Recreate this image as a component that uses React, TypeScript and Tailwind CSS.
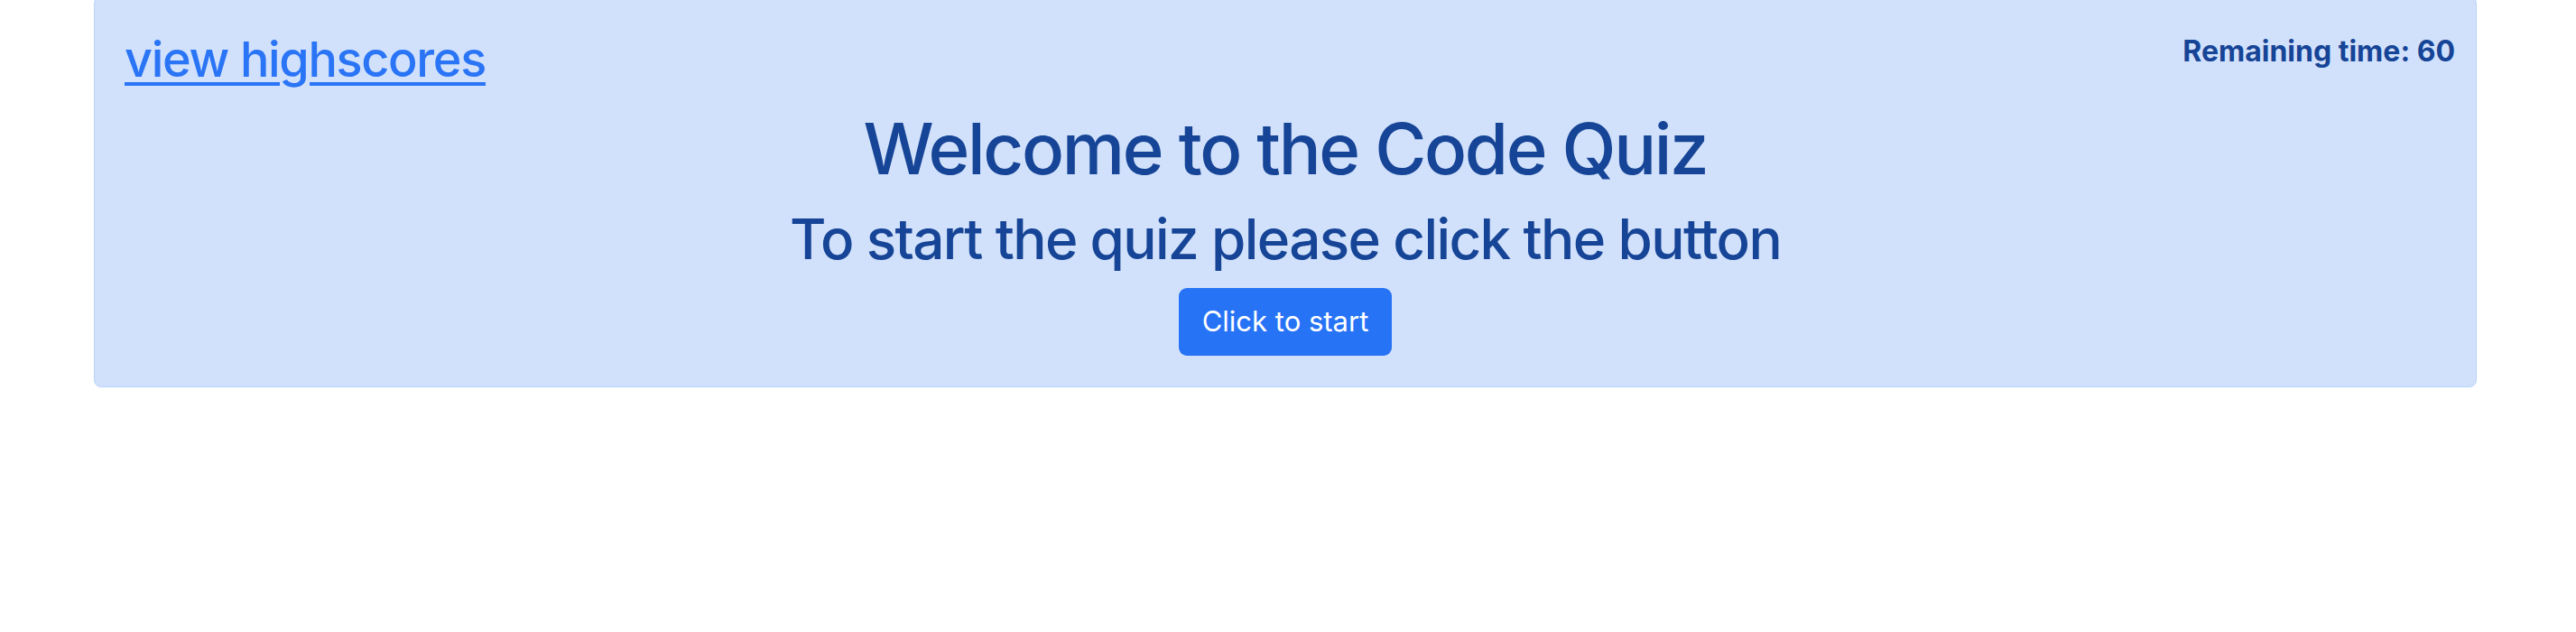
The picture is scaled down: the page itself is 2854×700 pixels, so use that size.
import React from "react";

export default function App() {
  return (
    <div className="w-[2854px] h-[700px] bg-white font-['Inter','Noto_Sans',sans-serif] overflow-hidden">
      <div className="ml-[104px] w-[2640px] -mt-[4px] pt-[37px] pb-[34px] px-[33px] bg-[#d1e1fb] border border-[#b7d3fb] rounded-[8px] text-[#164496]">
        <div className="flex justify-between items-start">
          <a href="#" className="text-[54px] leading-[1.2] font-medium tracking-[-0.025em] text-[#2a74f6] underline decoration-[4px] underline-offset-[6px]">
            view highscores
          </a>
          <div className="-mt-[1px] -mr-[10px] text-[32px] leading-[1.5] font-bold">Remaining time: 60</div>
        </div>
        <div className="flex flex-col items-center">
          <h1 className="mt-[19px] text-[78px] leading-[1.2] font-medium tracking-[-0.03em]">Welcome to the Code Quiz</h1>
          <h2 className="mt-[17px] text-[62px] leading-[1.2] font-medium tracking-[-0.026em]">To start the quiz please click the button</h2>
          <button className="mt-[16px] h-[75px] px-[26px] flex items-center rounded-[9px] bg-[#2773f6] text-white text-[31px] leading-[1.5]">
            Click to start
          </button>
        </div>
      </div>
    </div>
  );
}
